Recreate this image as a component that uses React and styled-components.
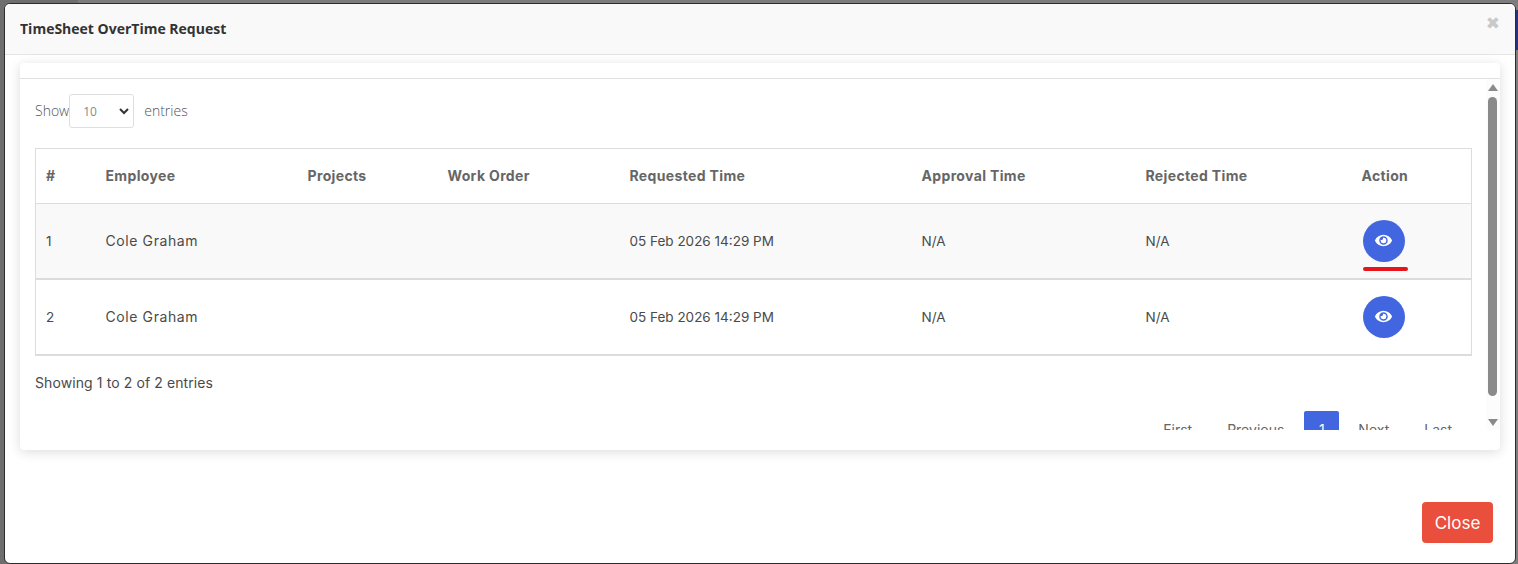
import React from 'react';
import styled, { createGlobalStyle } from 'styled-components';
import { FaEye } from 'react-icons/fa';

const BODY_FONT = '"Inter", "Liberation Sans", sans-serif';
const TITLE_FONT = '"Open Sans", "Liberation Sans", sans-serif';

const Global = createGlobalStyle`
  html, body { margin: 0; padding: 0; height: 100%; }
  body { background: #7d7d7d; overflow: hidden; font-family: ${BODY_FONT}; }
  * { box-sizing: border-box; }
`;

const Backdrop = styled.div`
  position: relative;
  width: 1518px;
  height: 564px;
  padding: 3px 2px 0 4px;
  background: linear-gradient(to right, #6e6e6e 78px, #7d7d7d 78px);
`;

const BackdropNavy = styled.div`
  position: absolute;
  right: 0;
  top: 10px;
  width: 2px;
  height: 40px;
  background: #26357a;
`;

const Modal = styled.div`
  width: 1512px;
  height: 561px;
  background: #fff;
  border: 1px solid #2c2c2c;
  border-radius: 6px;
  overflow: hidden;
  display: flex;
  flex-direction: column;
`;

const ModalHeader = styled.div`
  height: 51px;
  flex: none;
  background: #f9f9f9;
  border-bottom: 1px solid #e4e4e4;
  display: flex;
  align-items: center;
  justify-content: space-between;
  padding: 0 15px;
`;

const ModalTitle = styled.h5`
  margin: -2px 0 0;
  font: 700 14px ${TITLE_FONT};
  color: #333;
`;

const CloseX = styled.span`
  font: 700 17px "DejaVu Sans", sans-serif;
  color: #c9c9c9;
  margin-top: -13px;
`;

const ModalBody = styled.div`
  flex: 1;
  padding: 8px 15px 0;
  display: flex;
  flex-direction: column;
`;

const Card = styled.div`
  height: 387px;
  background: #fff;
  border-radius: 4px;
  box-shadow: 0 2px 12px rgba(0, 0, 0, 0.14);
  display: flex;
  flex-direction: column;
`;

const CardHead = styled.div`
  height: 16px;
  flex: none;
  border-bottom: 1px solid #e0e0e0;
`;

const CardMain = styled.div`
  height: 351px;
  flex: none;
  display: flex;
`;

const Clip = styled.div`
  flex: 1;
  overflow: hidden;
  padding: 15px 14px 0 15px;
`;

const Scrollbar = styled.div`
  width: 14px;
  flex: none;
  background: #fcfcfc;
  display: flex;
  flex-direction: column;
  align-items: center;
  padding: 5px 1px 0 0;
`;

const Arrow = styled.div`
  width: 0;
  height: 0;
  flex: none;
  border-left: 5px solid transparent;
  border-right: 5px solid transparent;
  ${p => (p.$down ? 'border-top: 7px solid #8a8a8a;' : 'border-bottom: 7px solid #8a8a8a;')}
`;

const Thumb = styled.div`
  width: 9px;
  height: 299px;
  margin: 6px 0 23px;
  border-radius: 5px;
  background: #8a8a8a;
`;

const LengthRow = styled.div`
  display: flex;
  align-items: center;
  height: 34px;
  padding-bottom: 2px;
  font: 300 14px ${TITLE_FONT};
  color: #555;
`;

const SelectBox = styled.div`
  width: 65px;
  height: 34px;
  margin: 0 10px -2px 0;
  padding: 0 4px 0 13px;
  border: 1px solid #dedede;
  border-radius: 3px;
  display: flex;
  align-items: center;
  justify-content: space-between;
  font-size: 12px;
  font-weight: 400;
  color: #888;
`;

const Table = styled.table`
  width: 1436px;
  margin-top: 20px;
  border-collapse: collapse;
  table-layout: fixed;
  border: 1px solid #dcdcdc;
  color: #4a4a4a;
`;

const Th = styled.th`
  height: 55px;
  padding: 0 0 1px 10px;
  text-align: left;
  font-weight: 700;
  font-size: 14px;
  letter-spacing: 0.35px;
  color: #666;
  border-bottom: 1px solid #dcdcdc;
`;

const Tr = styled.tr`
  background: ${p => (p.$odd ? '#f9f9f9' : '#fff')};
`;

const Td = styled.td`
  position: relative;
  height: ${p => p.$h}px;
  padding: 0 0 0 10px;
  font-size: 13.5px;
  border-bottom: 2px solid #dcdcdc;
`;

const NameCell = styled(Td)`
  font-size: 14px;
  letter-spacing: 0.6px;
`;

const EyeButton = styled.button`
  width: 42px;
  height: 42px;
  margin-left: 1px;
  border: 0;
  border-radius: 50%;
  background: #4166e0;
  color: #fff;
  display: flex;
  align-items: center;
  justify-content: center;
  padding: 0;
`;

const RedMark = styled.div`
  position: absolute;
  left: 11px;
  top: 63px;
  width: 45px;
  height: 4px;
  border-radius: 2px;
  background: #e8141c;
`;

const Info = styled.div`
  margin-top: 18px;
  font-size: 14px;
  letter-spacing: 0.1px;
  line-height: 18px;
  color: #4a4a4a;
`;

const Pager = styled.div`
  display: flex;
  justify-content: flex-end;
  align-items: flex-start;
  margin-top: 19px;
  font-size: 14px;
  color: #666;
`;

const PageLink = styled.span`
  padding: 10px 20px;
  line-height: 18px;
  margin-left: ${p => p.$pull || 0}px;
  ${p => p.$active && 'width: 35px; padding: 10px 0; text-align: center; background: #4166e0; color: #fff; border-radius: 2px;'}
`;

const ModalFooter = styled.div`
  flex: 1;
  display: flex;
  justify-content: flex-end;
  padding: 52px 7px 0 0;
`;

const CloseButton = styled.button`
  width: 71px;
  height: 41px;
  border: 0;
  border-radius: 4px;
  background: #ea4e3c;
  color: #fff;
  font: 400 17px ${BODY_FONT};
`;

const Chevron = () => (
  <svg width="10" height="7" viewBox="0 0 10 7" fill="none" stroke="#333" strokeWidth="2">
    <path d="M1 1l4 4 4-4" />
  </svg>
);

const columns = [
  { label: '#', width: 60 },
  { label: 'Employee', width: 202 },
  { label: 'Projects', width: 140 },
  { label: 'Work Order', width: 182 },
  { label: 'Requested Time', width: 292 },
  { label: 'Approval Time', width: 224 },
  { label: 'Rejected Time', width: 216 },
  { label: 'Action', width: 120 },
];

const rows = [
  { id: 1, employee: 'Cole Graham', requested: '05 Feb 2026 14:29 PM', h: 75, marked: true },
  { id: 2, employee: 'Cole Graham', requested: '05 Feb 2026 14:29 PM', h: 76 },
];

export default function App() {
  return (
    <>
      <Global />
      <Backdrop>
        <BackdropNavy />
        <Modal>
          <ModalHeader>
            <ModalTitle>TimeSheet OverTime Request</ModalTitle>
            <CloseX>✖</CloseX>
          </ModalHeader>
          <ModalBody>
            <Card>
              <CardHead />
              <CardMain>
                <Clip>
                  <LengthRow>
                    Show
                    <SelectBox>10<Chevron /></SelectBox>
                    entries
                  </LengthRow>
                  <Table>
                    <colgroup>
                      {columns.map(c => <col key={c.label} width={c.width} />)}
                    </colgroup>
                    <thead>
                      <tr>{columns.map(c => <Th key={c.label}>{c.label}</Th>)}</tr>
                    </thead>
                    <tbody>
                      {rows.map((r, i) => (
                        <Tr key={r.id} $odd={i === 0}>
                          <Td $h={r.h}>{r.id}</Td>
                          <NameCell $h={r.h}>{r.employee}</NameCell>
                          <Td $h={r.h} />
                          <Td $h={r.h} />
                          <Td $h={r.h}>{r.requested}</Td>
                          <Td $h={r.h}>N/A</Td>
                          <Td $h={r.h}>N/A</Td>
                          <Td $h={r.h}>
                            <EyeButton><FaEye size={17} /></EyeButton>
                            {r.marked && <RedMark />}
                          </Td>
                        </Tr>
                      ))}
                    </tbody>
                  </Table>
                  <Info>Showing 1 to 2 of 2 entries</Info>
                  <Pager>
                    <PageLink>First</PageLink>
                    <PageLink $pull={-5}>Previous</PageLink>
                    <PageLink $active>1</PageLink>
                    <PageLink $pull={-1}>Next</PageLink>
                    <PageLink $pull={-5}>Last</PageLink>
                  </Pager>
                </Clip>
                <Scrollbar>
                  <Arrow />
                  <Thumb />
                  <Arrow $down />
                </Scrollbar>
              </CardMain>
            </Card>
            <ModalFooter>
              <CloseButton>Close</CloseButton>
            </ModalFooter>
          </ModalBody>
        </Modal>
      </Backdrop>
    </>
  );
}
